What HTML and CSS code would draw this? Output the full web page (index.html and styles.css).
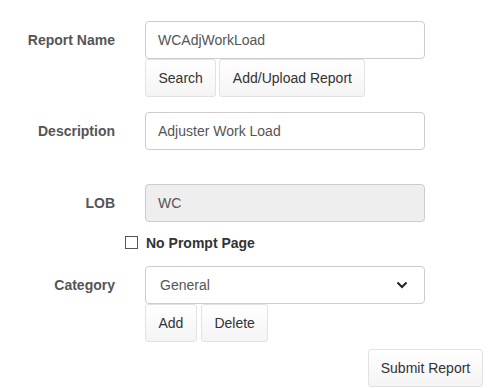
FILE: index.html
```html
<!DOCTYPE html>
<html lang="en">
  <head>
    <meta charset="UTF-8" />
    <meta name="viewport" content="width=device-width, initial-scale=1.0" />
    <title>Report</title>
    <link rel="stylesheet" href="styles.css">
  </head>

  <body>
    <form class="report-form">
      <!-- Report name -->
      <div class="form-row row-name">
        <label class="form-label">Report Name</label>
        <div class="field">
          <input class="text-input" type="text" value="WCAdjWorkLoad" />
          <div class="btn-group">
            <button type="button" class="btn">Search</button>
            <button type="button" class="btn">Add/Upload Report</button>
          </div>
        </div>
      </div>

      <!-- Description -->
      <div class="form-row row-desc">
        <label class="form-label">Description</label>
        <div class="field">
          <input class="text-input" type="text" value="Adjuster Work Load" />
        </div>
      </div>

      <!-- LOB -->
      <div class="form-row row-lob">
        <label class="form-label">LOB</label>
        <div class="field">
          <input class="text-input" type="text" value="WC" disabled />
        </div>
      </div>

      <div class="check-row">
        <span class="checkbox"></span>
        <span class="check-text">No Prompt Page</span>
      </div>

      <!-- Category -->
      <div class="form-row row-cat">
        <label class="form-label">Category</label>
        <div class="field">
          <div class="select">
            <span>General</span>
            <svg width="12" height="8" viewBox="0 0 12 8">
              <polyline points="1.5,1.5 6,6 10.5,1.5" fill="none" stroke="#222" stroke-width="2" />
            </svg>
          </div>
          <div class="btn-group wide">
            <button type="button" class="btn">Add</button>
            <button type="button" class="btn">Delete</button>
          </div>
        </div>
      </div>

      <div class="submit-row">
        <button type="button" class="btn">Submit Report</button>
      </div>
    </form>
  </body>
</html>
```

FILE: styles.css
```css
* {
  font-family: "Liberation Sans", Arial, sans-serif;
  margin: 0;
  padding: 0;
  box-sizing: border-box;
}

body {
  background-color: #ffffff;
  color: #333333;
  font-size: 14px;
}

.report-form {
  width: 483px;
  padding-top: 21px;
}

.form-row {
  display: flex;
  gap: 30px;
  align-items: flex-start;
}

.row-desc {
  margin-top: 15px;
}

.row-lob {
  margin-top: 34px;
}

.row-cat {
  margin-top: 16px;
}

.form-label {
  width: 115px;
  text-align: right;
  line-height: 38px;
  font-weight: bold;
  color: #555555;
}

.field {
  width: 280px;
}

.text-input,
.select {
  display: block;
  width: 280px;
  height: 38px;
  padding: 0 12px;
  border: 1px solid #cccccc;
  border-radius: 4px;
  font-size: 14px;
  color: #555555;
  background-color: #ffffff;
}

.text-input:disabled {
  background-color: #eeeeee;
  color: #555555;
}

.select {
  display: flex;
  align-items: center;
  justify-content: space-between;
  padding: 0 16px 0 14px;
}

.btn-group {
  display: flex;
  gap: 3px;
}

.btn-group.wide {
  gap: 4px;
}

.btn {
  height: 38px;
  padding: 0 12.5px;
  font-size: 14px;
  color: #333333;
  white-space: nowrap;
  border: 1px solid #e2e2e2;
  border-radius: 3px;
  background: linear-gradient(#ffffff, #f4f4f4);
}

.check-row {
  display: flex;
  align-items: center;
  gap: 8px;
  margin-top: 13px;
  padding-left: 125px;
  height: 15px;
}

.checkbox {
  width: 13px;
  height: 13px;
  border: 1px solid #555555;
  background-color: #ffffff;
}

.check-text {
  font-weight: bold;
  color: #333333;
}

.submit-row {
  display: flex;
  justify-content: flex-end;
  margin-top: 7px;
}

.submit-row .btn {
  width: 115px;
  padding: 0;
}
```
